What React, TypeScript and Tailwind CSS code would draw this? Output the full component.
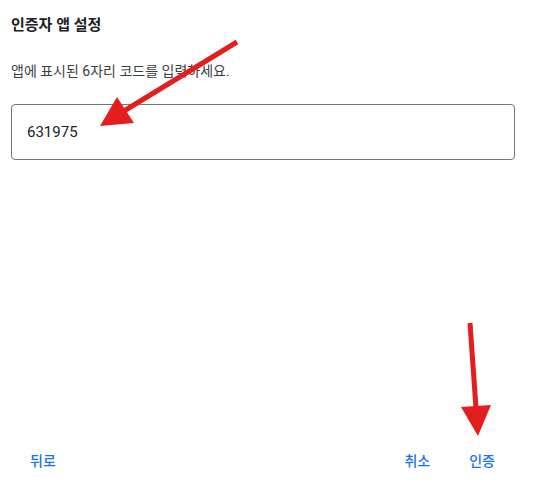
import React from 'react';

const font = { fontFamily: 'Roboto, "Noto Sans CJK KR", "Noto Sans", sans-serif' };

const AnnotationArrows: React.FC = () => (
  <svg
    className="pointer-events-none absolute inset-0"
    width={538}
    height={492}
    viewBox="0 0 538 492"
  >
    <line x1={237} y1={42} x2={124} y2={111} stroke="#e31e1e" strokeWidth={5} />
    <polygon points="117,97 134,123 100,126" fill="#e31e1e" />
    <line x1={470} y1={323} x2={476} y2={408} stroke="#e31e1e" strokeWidth={5} />
    <polygon points="461,407 491,405 478,436" fill="#e31e1e" />
  </svg>
);

export default function App() {
  return (
    <div className="relative h-[492px] w-[538px] overflow-hidden bg-white" style={font}>
      <div className="flex h-full flex-col pl-[11px] pr-[23px]">
        <h1 className="mt-[15px] text-[15px] font-bold leading-[20px] text-[#202124]">
          인증자 앱 설정
        </h1>
        <p className="mt-[26px] text-[14px] leading-[20px] text-[#3c4043]">
          앱에 표시된 6자리 코드를 입력하세요.
        </p>
        <div className="mt-[23px] flex h-[56px] items-center rounded-[4px] border border-[#747775] px-[15px]">
          <span className="text-[15px] text-[#202124]">631975</span>
        </div>

        <div className="mt-auto mb-[14px] flex items-center justify-between">
          <button className="ml-[11px] px-[8px] py-[6px] text-[14px] font-medium text-[#1a73e8]">뒤로</button>
          <div className="flex items-center gap-[23px] pr-[12px]">
            <button className="px-[8px] py-[6px] text-[14px] font-medium text-[#1a73e8]">취소</button>
            <button className="px-[8px] py-[6px] text-[14px] font-medium text-[#1a73e8]">인증</button>
          </div>
        </div>
      </div>
      <AnnotationArrows />
    </div>
  );
}
